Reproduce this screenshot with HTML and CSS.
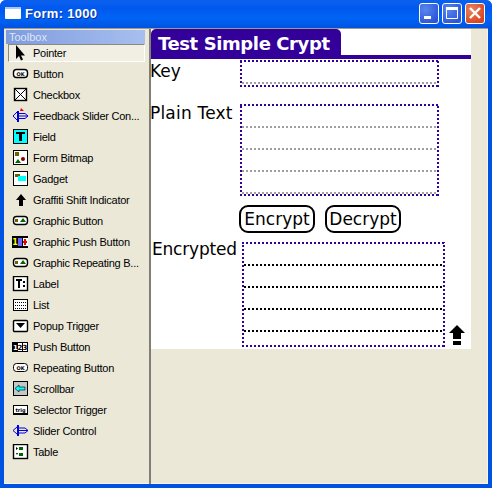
FILE: index.html
```html
<!DOCTYPE html>
<html lang="en">
<head>
<meta charset="utf-8">
<title>Form: 1000</title>
<link rel="stylesheet" href="styles.css">
</head>
<body>
<div class="window">
  <header class="titlebar">
    <svg class="app-icon" width="16" height="12" viewBox="0 0 16 12"><rect x="0" y="0" width="16" height="12" rx="1" fill="#fff"/><rect x="0" y="0" width="16" height="2" fill="#a9c4f5"/></svg>
    <span class="title">Form: 1000</span>
    <div class="controls">
      <button class="ctl"><svg width="20" height="20" viewBox="0 0 20 20"><rect x="5" y="13" width="7" height="3" fill="#fff"/></svg></button>
      <button class="ctl"><svg width="20" height="20" viewBox="0 0 20 20"><path d="M5 4.5H15.5V15.5H4.5V4.5" fill="none" stroke="#fff"/><rect x="4" y="4" width="12" height="3" fill="#fff"/></svg></button>
      <button class="ctl close"><svg width="20" height="20" viewBox="0 0 20 20"><path d="M5 5L15 15M15 5L5 15" stroke="#fff" stroke-width="2.4"/></svg></button>
    </div>
  </header>
  <div class="client">
    <aside class="toolbox">
      <div class="tb-head">Toolbox</div>
      <ul class="tools">
        <li class="tool selected"><svg class="ico" viewBox="0 0 18 16"><path d="M4 0V14L7 11L9 15.500L11 14.500L9 10.500H13Z" fill="#000"/></svg><span>Pointer</span></li>
        <li class="tool"><svg class="ico" viewBox="0 0 18 16"><rect x="1.500" y="3.500" width="14" height="8" rx="3" fill="#fff" stroke="#000" stroke-width="1.400"/><text x="8.500" y="9.500" class="mini">OK</text></svg><span>Button</span></li>
        <li class="tool"><svg class="ico" viewBox="0 0 18 16"><rect x="2.500" y="1.500" width="12" height="12" fill="#fff" stroke="#000" stroke-width="1.400"/><path d="M3 2L14 13M14 2L3 13" stroke="#000"/></svg><span>Checkbox</span></li>
        <li class="tool"><svg class="ico" viewBox="0 0 18 16"><path d="M5 4L1 8L5 12M7 5.500H13L16 8L13 10.500H7M7 8H16" fill="none" stroke="#00d"/><rect x="5" y="3" width="2" height="11" fill="#00d"/><path d="M9 0L12 3H8Z" fill="#e00"/></svg><span>Feedback Slider Con...</span></li>
        <li class="tool"><svg class="ico" viewBox="0 0 18 16"><rect x="1.500" y="0.500" width="14" height="14" fill="#0ff" stroke="#000"/><rect x="4" y="3" width="9" height="2" fill="#000"/><rect x="7" y="3" width="3" height="9" fill="#000"/></svg><span>Field</span></li>
        <li class="tool"><svg class="ico" viewBox="0 0 18 16"><rect x="1.500" y="0.500" width="14" height="14" fill="#fff" stroke="#000"/><rect x="3" y="2" width="4" height="4" fill="#660"/><circle cx="11" cy="9" r="2" fill="#800"/><path d="M3 13L6 9L9 13Z" fill="#060"/></svg><span>Form Bitmap</span></li>
        <li class="tool"><svg class="ico" viewBox="0 0 18 16"><rect x="1.500" y="0.500" width="14" height="14" fill="#fff" stroke="#000"/><rect x="3" y="3" width="5" height="3" fill="#660"/><rect x="6" y="5" width="8" height="5" fill="#0ff"/></svg><span>Gadget</span></li>
        <li class="tool"><svg class="ico" viewBox="0 0 18 16"><path d="M9 2L14 8H11V14H7V8H4Z" fill="#000"/></svg><span>Graffiti Shift Indicator</span></li>
        <li class="tool"><svg class="ico" viewBox="0 0 18 16"><rect x="1.500" y="3.500" width="14" height="8" rx="3" fill="#fff" stroke="#000" stroke-width="1.400"/><rect x="3" y="6" width="3" height="3" fill="#660"/><path d="M8 9L11 5L14 9Z" fill="#060"/></svg><span>Graphic Button</span></li>
        <li class="tool"><svg class="ico" viewBox="0 0 18 16"><rect x="0" y="2" width="16" height="12" fill="#000"/><text x="3" y="11" class="mini one">1</text><rect x="6" y="4" width="4" height="8" fill="#66f"/><rect x="11" y="4" width="5" height="8" fill="#fff"/><path d="M13 5V11M11 8H15" stroke="#e00" stroke-width="2"/></svg><span>Graphic Push Button</span></li>
        <li class="tool"><svg class="ico" viewBox="0 0 18 16"><rect x="1.500" y="3.500" width="14" height="8" rx="3" fill="#fff" stroke="#000" stroke-width="1.400"/><rect x="3" y="6" width="3" height="3" fill="#660"/><path d="M8 9L11 5L14 9Z" fill="#060"/></svg><span>Graphic Repeating B...</span></li>
        <li class="tool"><svg class="ico" viewBox="0 0 18 16"><rect x="1.500" y="0.500" width="14" height="14" fill="#fff" stroke="#000" stroke-width="1.400"/><rect x="4" y="3" width="6" height="2" fill="#000"/><rect x="6" y="3" width="2" height="9" fill="#000"/><rect x="11" y="5" width="2" height="2" fill="#000"/><rect x="11" y="9" width="2" height="2" fill="#000"/></svg><span>Label</span></li>
        <li class="tool"><svg class="ico" viewBox="0 0 18 16"><rect x="1.500" y="2.500" width="14" height="11" fill="#fff" stroke="#000"/><path d="M3 5.500H14M3 8.500H14M3 11.500H14" stroke="#000" stroke-dasharray="1 1"/></svg><span>List</span></li>
        <li class="tool"><svg class="ico" viewBox="0 0 18 16"><rect x="1.500" y="2.500" width="14" height="11" rx="1" fill="#fff" stroke="#000" stroke-width="1.400"/><path d="M4 5H13L8.500 10Z" fill="#000"/></svg><span>Popup Trigger</span></li>
        <li class="tool"><svg class="ico" viewBox="0 0 18 16"><rect x="0" y="3" width="16" height="10" fill="#000"/><rect x="6" y="4" width="4" height="8" fill="#fff"/><rect x="11" y="4" width="4" height="8" fill="#fff"/><text x="3.500" y="11" class="mini inv">1</text><text x="8" y="11" class="mini inv dark">2</text><text x="13" y="11" class="mini inv dark">3</text></svg><span>Push Button</span></li>
        <li class="tool"><svg class="ico" viewBox="0 0 18 16"><rect x="1.500" y="3.500" width="14" height="8" rx="3" fill="#fff" stroke="#000"/><text x="8.500" y="9.500" class="mini">OK</text></svg><span>Repeating Button</span></li>
        <li class="tool"><svg class="ico" viewBox="0 0 18 16"><rect x="1.500" y="0.500" width="14" height="14" fill="#c6c6c6" stroke="#000"/><path d="M3 7.500L7 4V6H13V9H7V11Z" fill="#0ff" stroke="#000" stroke-width="0.600"/></svg><span>Scrollbar</span></li>
        <li class="tool"><svg class="ico" viewBox="0 0 18 16"><rect x="1" y="3" width="15" height="10" fill="#000"/><rect x="2" y="4" width="13" height="7" fill="#fff"/><text x="8.500" y="10" class="mini">trig</text></svg><span>Selector Trigger</span></li>
        <li class="tool"><svg class="ico" viewBox="0 0 18 16"><path d="M5 4L1 7.500L5 11M7 5H13L16 7.500L13 10H7M7 7.500H16" fill="none" stroke="#00d"/><rect x="5" y="2" width="2" height="11" fill="#00d"/></svg><span>Slider Control</span></li>
        <li class="tool"><svg class="ico" viewBox="0 0 18 16"><rect x="1.500" y="0.500" width="14" height="14" fill="#fff" stroke="#000" stroke-width="1.400"/><rect x="7" y="3" width="4" height="3" fill="#060"/><rect x="7" y="9" width="4" height="3" fill="#060"/><path d="M4 3L6 4.500L4 6Z M4 9H6L5 11Z" fill="#000"/></svg><span>Table</span></li>
      </ul>
    </aside>
    <main class="desk">
      <section class="form">
        <div class="form-tab">Test Simple Crypt</div>
        <div class="form-rule"></div>
        <span class="lbl lbl-key">Key</span>
        <div class="fld fld-key"><i class="ln gray ln-key"></i></div>
        <span class="lbl lbl-plain">Plain Text</span>
        <div class="fld fld-plain">
          <i class="ln gray l1"></i><i class="ln gray l2"></i><i class="ln gray l3"></i><i class="ln gray l4"></i>
        </div>
        <button class="pbtn pbtn-enc">Encrypt</button>
        <button class="pbtn pbtn-dec">Decrypt</button>
        <span class="lbl lbl-enc">Encrypted</span>
        <div class="fld fld-enc">
          <i class="ln black e1"></i><i class="ln black e2"></i><i class="ln black e3"></i><i class="ln black e4"></i>
        </div>
        <svg class="shift" width="16" height="20" viewBox="0 0 16 20"><path d="M8 0L16 8H12V14H4V8H0Z" fill="#000"/><rect x="4" y="16" width="8" height="4" fill="#000"/></svg>
      </section>
    </main>
  </div>
</div>
</body>
</html>
```

FILE: styles.css
```css
* { box-sizing: border-box; }
html, body { margin: 0; padding: 0; background: #fff; }
body { width: 493px; height: 488px; overflow: hidden; }

.window {
  width: 492px;
  height: 488px;
  display: flex;
  flex-direction: column;
  background: #0053e1;
  padding: 0 4px 4px;
  border-radius: 6px 6px 0 0;
  font-family: "Liberation Sans", Arial, sans-serif;
}

.titlebar {
  height: 28px;
  margin: 0 -4px;
  padding: 0 7px 0 5px;
  display: flex;
  align-items: center;
  background: linear-gradient(#0a62e6 0, #0a5ff0 2px, #0058ee 8px, #0064f5 18px, #0053e1 28px);
  border-radius: 6px 6px 0 0;
}
.app-icon { flex: none; margin-top: -2px; }
.title {
  margin-left: 4px;
  margin-top: -2px;
  color: #fff;
  font: bold 13px "Liberation Sans", Arial, sans-serif;
  letter-spacing: 0.3px;
  text-shadow: 1px 1px 0 #0a2fa0;
}
.controls { margin-left: auto; margin-top: -2px; display: flex; gap: 3px; }
.ctl {
  width: 20px;
  height: 21px;
  padding: 0;
  border: 1px solid #fff;
  border-radius: 3px;
  background: radial-gradient(circle at 30% 30%, #5b86ee, #2a55d8 80%);
  display: flex;
  align-items: center;
  justify-content: center;
}
.ctl svg { display: block; margin: -1px; flex: none; }
.close { background: radial-gradient(circle at 30% 30%, #e88560, #d8431e 80%); }

.client {
  flex: 1;
  display: flex;
  min-height: 0;
  background: #ebe8d8;
  border-top: 1px solid #9a9a90;
  box-shadow: inset -1px -1px 0 #f7f5ea;
}

.toolbox {
  width: 147px;
  flex: none;
  padding: 1px 4px 0 2px;
  border-right: 2px solid #7f7f78;
  font-size: 11px;
  color: #000;
}
.tb-head {
  height: 14px;
  line-height: 14px;
  padding-left: 3px;
  font-size: 11px;
  color: #dfe6f6;
  background: linear-gradient(90deg, #7e9cdf, #a8bfee);
}
.tools { list-style: none; margin: -2px 0 0; padding: 0; }
.tool {
  height: 21px;
  display: flex;
  align-items: center;
  padding-left: 6px;
  white-space: nowrap;
  position: relative;
}
.tool span { margin-left: 3px; letter-spacing: -0.25px; }
.ico { width: 18px; height: 16px; flex: none; display: block; }
.selected::before {
  content: "";
  position: absolute;
  left: 2px; right: 0; top: 2px; bottom: 1px;
  background: #f1efe3;
  border: 1px solid;
  border-color: #8b8a80 #fff #fff #8b8a80;
}
.selected > * { position: relative; }
.mini {
  font: bold 5px "DejaVu Sans", sans-serif;
  text-anchor: middle;
  fill: #000;
}
.one { fill: #ff0; font-size: 8px; }
.inv { fill: #fff; font-size: 7px; }
.dark { fill: #000; }

.desk { flex: 1; min-width: 0; padding-right: 17px; }
.form {
  position: relative;
  width: 320px;
  height: 320px;
  background: #fff;
  color: #000;
  font-family: "DejaVu Sans", sans-serif;
}
.form-tab {
  position: absolute;
  left: 0; top: 0;
  width: 190px;
  height: 27px;
  padding-left: 7px;
  background: #330099;
  border-radius: 5px 5px 0 0;
  color: #fff;
  font-size: 18px;
  font-weight: bold;
  line-height: 29px;
  letter-spacing: -0.4px;
  white-space: nowrap;
}
.form-rule {
  position: absolute;
  left: 0; right: 0; top: 26px;
  height: 4px;
  background: #330099;
}
.lbl {
  position: absolute;
  font-size: 17px;
  line-height: 20px;
  white-space: nowrap;
}
.lbl-key { left: -1px; top: 32px; }
.lbl-plain { left: -1px; top: 74px; letter-spacing: 0.2px; }
.lbl-enc { left: 1px; top: 210px; letter-spacing: -0.2px; }

.fld {
  position: absolute;
  background-image:
    repeating-linear-gradient(90deg, #330099 0 2px, transparent 2px 4px),
    repeating-linear-gradient(90deg, #330099 0 2px, transparent 2px 4px),
    repeating-linear-gradient(0deg, #330099 0 2px, transparent 2px 4px),
    repeating-linear-gradient(0deg, #330099 0 2px, transparent 2px 4px);
  background-size: 100% 2px, 100% 2px, 2px 100%, 2px 100%;
  background-position: 0 0, 0 100%, 0 0, 100% 0;
  background-repeat: no-repeat;
}
.fld-key { left: 89px; top: 31px; width: 199px; height: 27px; }
.fld-plain { left: 89px; top: 75px; width: 199px; height: 92px; }
.fld-enc { left: 91px; top: 213px; width: 203px; height: 105px; }

.ln {
  position: absolute;
  left: 2px; right: 2px;
  height: 2px;
}
.gray { background: repeating-linear-gradient(90deg, #a0a0a0 0 2px, transparent 2px 4px); }
.black { background: repeating-linear-gradient(90deg, #000 0 2px, transparent 2px 4px); }
.ln-key { top: 22px; }
.l1 { top: 22px; } .l2 { top: 44px; } .l3 { top: 66px; } .l4 { top: 88px; }
.e1 { top: 22px; } .e2 { top: 44px; } .e3 { top: 66px; } .e4 { top: 88px; }

.pbtn {
  position: absolute;
  top: 176px;
  height: 28px;
  width: 76px;
  padding: 0;
  background: #fff;
  color: #000;
  border: 2px solid #000;
  border-radius: 9px;
  font: 17px/22px "DejaVu Sans", sans-serif;
}
.pbtn-enc { left: 88px; }
.pbtn-dec { left: 174px; }
.shift { position: absolute; left: 298px; top: 296px; }
```
